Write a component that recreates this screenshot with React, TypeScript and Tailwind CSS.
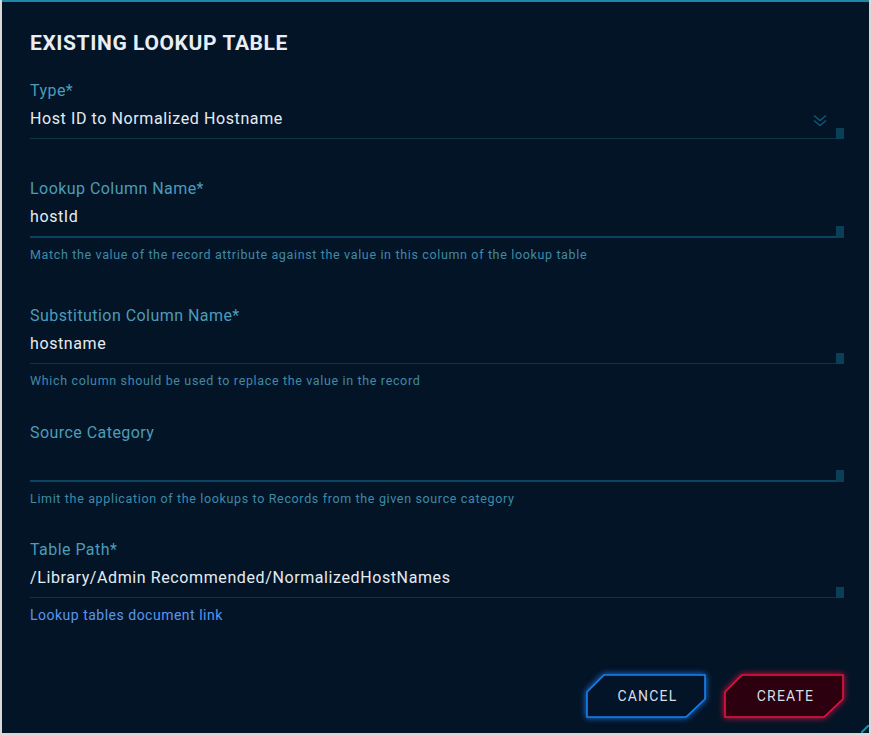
import React from "react";

const FONT = { fontFamily: "Roboto, 'Noto Sans', 'Liberation Sans', sans-serif" };

type FieldProps = {
  label: string;
  value?: string;
  thick?: boolean;
  select?: boolean;
};

function Field({ label, value, thick, select }: FieldProps) {
  return (
    <div>
      <div className="h-[20px] text-[16px] leading-[20px] tracking-[0.45px] text-[#4c9cb8]">{label}</div>
      <div className="flex">
        <div
          className={`flex flex-1 items-start justify-between pt-[7px] ${
            thick ? "h-[39px] border-b-2 border-[#0a4460]" : "h-[38px] border-b border-[#0d3549]"
          }`}
        >
          <span className="text-[16px] leading-[22px] tracking-[0.6px] text-[#e4ecf2]">{value}</span>
          {select && (
            <svg width="14" height="14" viewBox="0 0 14 14" className="mt-[6px] mr-[9px]" fill="none">
              <path d="M1 1.5 L7 6.5 L13 1.5" stroke="#0f5674" strokeWidth="1.6" />
              <path d="M1 6.5 L7 11.5 L13 6.5" stroke="#0f5674" strokeWidth="1.6" />
            </svg>
          )}
        </div>
        <div className={`w-2 self-end bg-[#0a3f57] ${thick ? "h-[12px]" : "h-[11px]"}`} />
      </div>
    </div>
  );
}

function Helper({ children, link }: { children: React.ReactNode; link?: boolean }) {
  return (
    <div
      className={`leading-[16px] ${
        link
          ? "mt-[9px] text-[14px] tracking-[0.5px] text-[#5a96ec]"
          : "mt-[9px] text-[12.5px] tracking-[0.65px] text-[#3f8aa6]"
      }`}
    >
      {children}
    </div>
  );
}

function ShapeButton({ label, tone }: { label: string; tone: "blue" | "red" }) {
  const blue = tone === "blue";
  return (
    <button className="relative flex h-[44px] w-[120px] items-center justify-center">
      <svg
        className={`absolute inset-0 ${
          blue ? "[filter:drop-shadow(0_0_3px_#1a7ff0)]" : "[filter:drop-shadow(0_0_3px_#e0103f)]"
        }`}
        width="120"
        height="44"
        viewBox="0 0 120 44"
      >
        <polygon
          points="18,1 119,1 119,25 100,43 1,43 1,18"
          fill={blue ? "#041428" : "#2c000e"}
          stroke={blue ? "#1a80f2" : "#e2143f"}
          strokeWidth="1.6"
        />
      </svg>
      <span className="relative ml-[3px] text-[14px] tracking-[1.2px] text-[#d4dfe8]">{label}</span>
    </button>
  );
}

export default function App() {
  return (
    <div className="min-h-[736px] bg-[#d8d8d8]" style={FONT}>
      <div className="relative ml-[2px] h-[733px] w-[867px] overflow-hidden border-t-2 border-[#1a88a6] bg-[#041427] pl-[28px] pr-[25px] pt-[27px]">
        <h1 className="text-[21px] font-bold leading-[28px] tracking-[0.6px] text-[#e8eef3]">
          EXISTING LOOKUP TABLE
        </h1>

        <div className="mt-[24px]">
          <Field label="Type*" value="Host ID to Normalized Hostname" select />
        </div>

        <div className="mt-[40px]">
          <Field label="Lookup Column Name*" value="hostId" thick />
          <Helper>Match the value of the record attribute against the value in this column of the lookup table</Helper>
        </div>

        <div className="mt-[43px]">
          <Field label="Substitution Column Name*" value="hostname" />
          <Helper>Which column should be used to replace the value in the record</Helper>
        </div>

        <div className="mt-[34px]">
          <Field label="Source Category" thick />
          <Helper>Limit the application of the lookups to Records from the given source category</Helper>
        </div>

        <div className="mt-[33px]">
          <Field label="Table Path*" value="/Library/Admin Recommended/NormalizedHostNames" />
          <Helper link>Lookup tables document link</Helper>
        </div>

        <div className="mt-[51px] flex justify-end gap-[18px]">
          <ShapeButton label="CANCEL" tone="blue" />
          <ShapeButton label="CREATE" tone="red" />
        </div>

        <svg className="absolute bottom-0 right-0" width="8" height="8" viewBox="0 0 8 8">
          <path d="M0 8 L8 0" stroke="#1a8fa8" strokeWidth="2" />
        </svg>
      </div>
    </div>
  );
}
